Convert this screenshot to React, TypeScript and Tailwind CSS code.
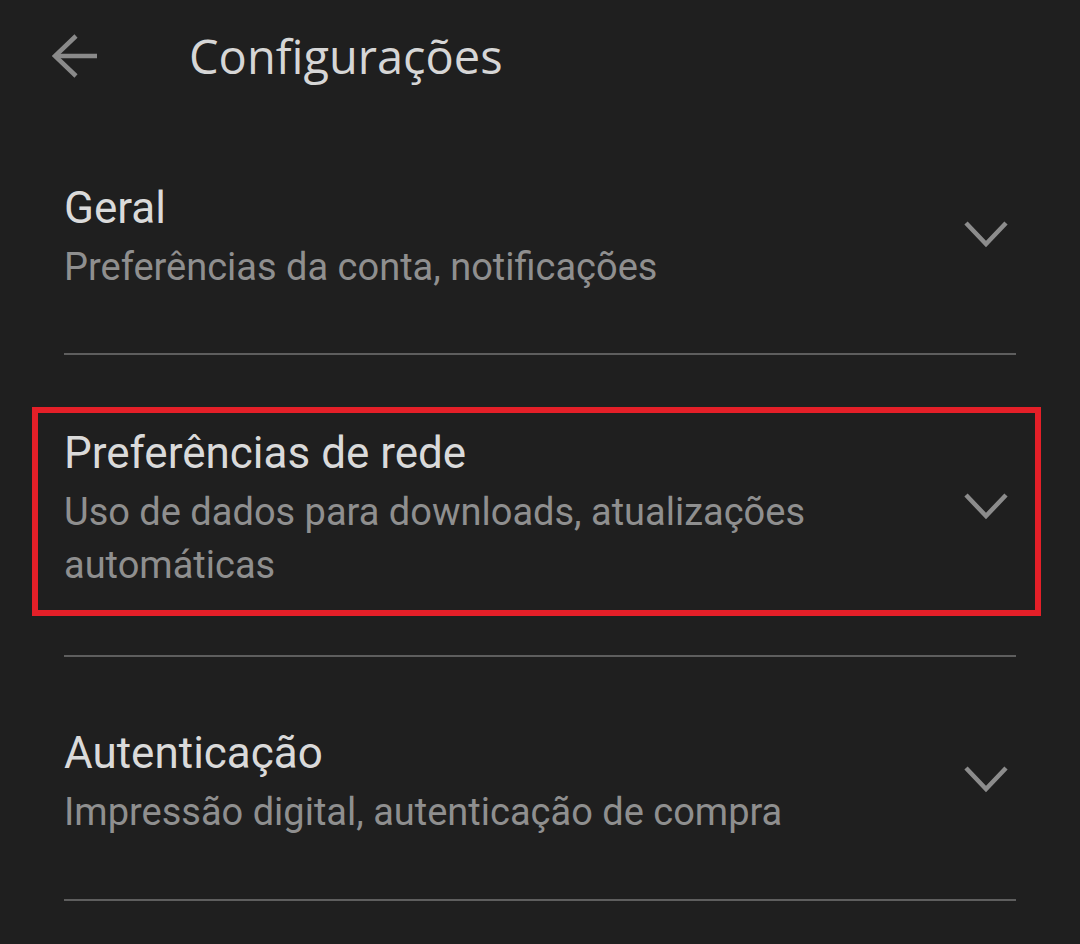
import React from "react";

function Chevron() {
  return (
    <svg width="46" height="30" viewBox="0 0 46 30" className="shrink-0">
      <polyline points="3,4 23,25 43,4" fill="none" stroke="#8c8c8c" strokeWidth="4.5" />
    </svg>
  );
}

function Item({ title, subtitle }: { title: string; subtitle: React.ReactNode }) {
  return (
    <div className="flex items-center justify-between">
      <div className="flex flex-col gap-[7px]">
        <div className="text-[44px] leading-[52px] text-[#dadada]">{title}</div>
        <div className="text-[38px] leading-[53px] text-[#8f8f8f]">{subtitle}</div>
      </div>
      <div className="mr-[7px] mb-[8px]">
        <Chevron />
      </div>
    </div>
  );
}

export default function App() {
  return (
    <div
      className="w-[1080px] h-[944px] bg-[#1f1f1f] overflow-hidden"
      style={{ fontFamily: "Roboto, 'Noto Sans', sans-serif" }}
    >
      <div className="flex items-center h-[112px] pl-[52px]">
        <svg width="48" height="46" viewBox="0 0 48 46" className="shrink-0">
          <polyline points="24,3 3,23 24,43" fill="none" stroke="#8a8a8a" strokeWidth="4.5" />
          <line x1="3" y1="23" x2="45" y2="23" stroke="#8a8a8a" strokeWidth="4.5" />
        </svg>
        <div
          className="ml-[89px] text-[47px] font-medium text-[#d6d6d6]"
          style={{ fontFamily: "'Open Sans', sans-serif" }}
        >
          Configurações
        </div>
      </div>

      <div className="pt-[70px] px-[64px]">
        <Item title="Geral" subtitle="Preferências da conta, notificações" />
      </div>
      <div className="mx-[64px] mt-[59px] h-[2px] bg-[#5e5e5e]" />

      <div className="mt-[52px] ml-[32px] mr-[39px] border-[6px] border-[#e41f28] pl-[26px] pr-[19px] pt-[14px] pb-[18px]">
        <Item
          title="Preferências de rede"
          subtitle={
            <>
              Uso de dados para downloads, atualizações
              <br />
              automáticas
            </>
          }
        />
      </div>
      <div className="mx-[64px] mt-[39px] h-[2px] bg-[#5e5e5e]" />

      <div className="pt-[70px] px-[64px]">
        <Item title="Autenticação" subtitle="Impressão digital, autenticação de compra" />
      </div>
      <div className="mx-[64px] mt-[60px] h-[2px] bg-[#5e5e5e]" />
    </div>
  );
}
